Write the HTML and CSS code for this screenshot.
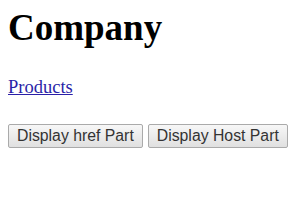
FILE: index.html
```html
<!DOCTYPE html>
<html>
<head>
    <title>Company</title>
    <link rel="stylesheet" href="styles.css">
</head>
<body>
    <h1>Company</h1>
    <p><a href="#" id="productsLink">Products</a></p>
    <div class="button-row">
        <button class="part-btn">Display href Part</button>
        <button class="part-btn">Display Host Part</button>
        <button class="part-btn">Display Path Part</button>
    </div>
</body>
</html>
```

FILE: styles.css
```css
html {
    overflow: hidden;
}

body {
    font-family: "Liberation Serif", serif;
    margin: 6px 8px;
}

h1 {
    font-size: 37px;
    margin: 0 0 28px;
}

p {
    font-size: 18.5px;
    margin: 0 0 25.5px;
}

a {
    color: #2a1fa8;
}

.button-row {
    display: flex;
    gap: 5px;
    white-space: nowrap;
}

.part-btn {
    flex: none;
    font-family: "Liberation Sans", Arial, sans-serif;
    font-size: 15.8px;
    color: #333;
    height: 24px;
    padding: 0 8px;
    border: 1px solid #aaa;
    border-radius: 2px;
    background: linear-gradient(#f7f7f7, #e0e0e0);
}
```
